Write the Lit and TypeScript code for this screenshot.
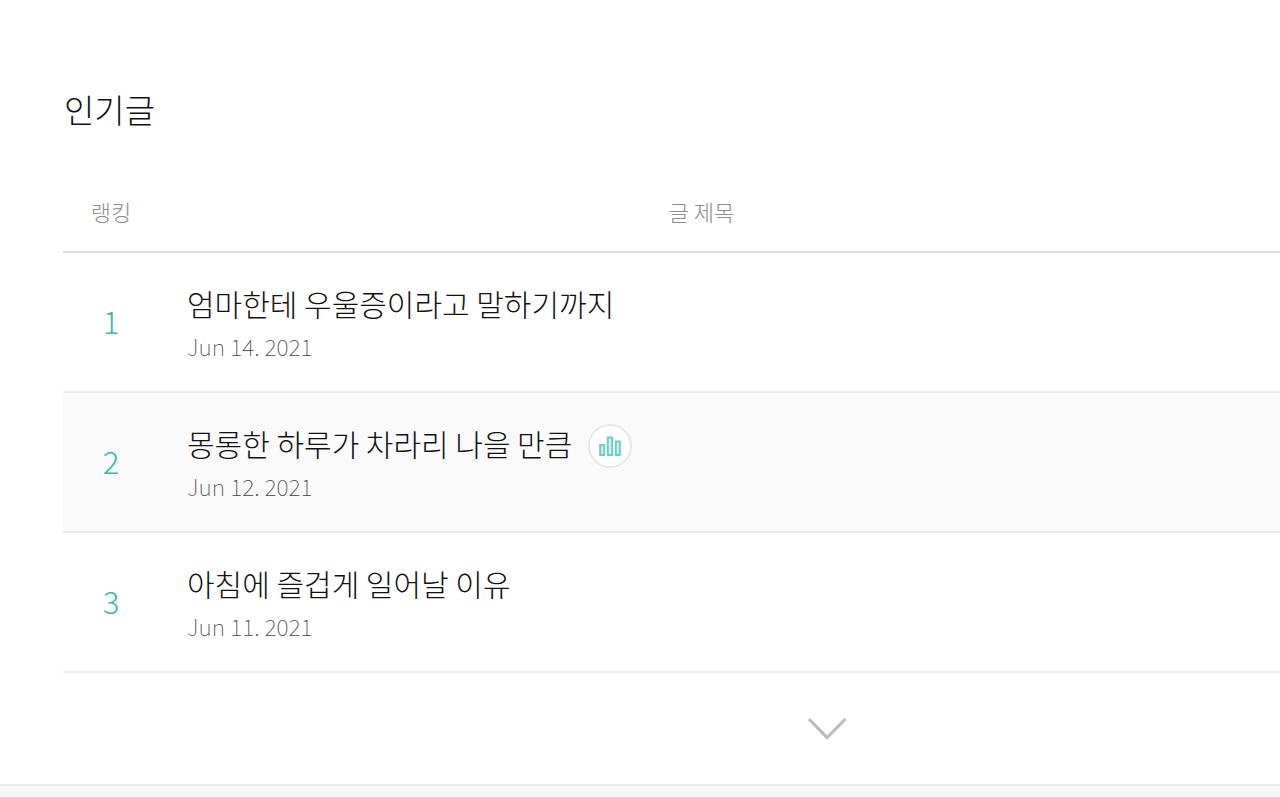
import { LitElement, html, css } from "lit";
import { customElement } from "lit/decorators.js";

interface Post { rank: number; title: string; date: string; active?: boolean; }

const posts: Post[] = [
  { rank: 1, title: "엄마한테 우울증이라고 말하기까지", date: "Jun 14. 2021" },
  { rank: 2, title: "몽롱한 하루가 차라리 나을 만큼", date: "Jun 12. 2021", active: true },
  { rank: 3, title: "아침에 즐겁게 일어날 이유", date: "Jun 11. 2021" },
];

@customElement("app-root")
export class AppRoot extends LitElement {
  static styles = css`
    :host { display: block; min-height: 100vh; overflow: hidden; background: #fff; color: #111; font-family: "Noto Sans CJK KR", sans-serif; font-weight: 300; }
    * { box-sizing: border-box; }
    .page { display: flex; flex-direction: column; min-height: 100vh; }
    .popular { padding: 85px 0 0 63px; }
    h2 { margin: 0; padding-left: 1px; font-size: 33px; line-height: 48px; font-weight: 300; }
    table { width: 100%; margin-top: 41px; border-collapse: separate; border-spacing: 0; table-layout: fixed; }
    th, td { padding: 0; font-weight: 300; }
    .rank-col { width: 96px; }
    th { height: 79px; padding-bottom: 4px; border-bottom: 2px solid #d9d9d9; color: #8c8c8c; font-size: 22px; line-height: 32px; }
    .title-head { padding-right: 36px; }
    td { height: 140px; border-bottom: 2px solid #ebebeb; }
    .rank { padding-bottom: 4px; text-align: center; color: #3ab8ae; font-size: 31px; }
    .post { padding: 4px 0 0 28px; }
    .line { display: flex; align-items: center; gap: 16px; height: 44px; }
    .title { color: inherit; text-decoration: none; font-size: 30px; line-height: 44px; }
    time { display: block; color: #444; font-size: 23px; line-height: 42px; font-weight: 100; }
    .active td { background: #fafafa; }
    button { display: grid; place-items: center; padding: 0; border: 0; background: none; }
    .stats { width: 44px; height: 44px; margin-top: 6px; border: 2px solid #e8e8e8; border-radius: 50%; background: #fff; }
    .more { width: 48px; height: 32px; margin: 40px auto 0; }
    .more-row { padding-left: 310px; }
    .footer { flex: 1; margin-top: 39px; border-top: 2px solid #ebebeb; background: #f7f7f7; }
  `;

  render() {
    return html`<div class="page">
      <main class="popular">
        <h2>인기글</h2>
        <table>
          <thead><tr><th class="rank-col" scope="col">랭킹</th><th class="title-head" scope="col">글 제목</th></tr></thead>
          <tbody>${posts.map((p) => html`<tr class=${p.active ? "active" : ""}>
            <td class="rank">${p.rank}</td>
            <td class="post">
              <div class="line"><a class="title" href="#">${p.title}</a>${p.active ? html`<button class="stats" aria-label="통계">
                <svg width="22" height="20" viewBox="0 0 22 20" fill="#d9f1ef" stroke="#6cccc5" stroke-width="2"><path d="M1.2 9h4v10h-4zM8.8 1.5h4.400v17.500h-4.400zM16.800 5.500h4v13.500h-4z"/></svg></button>` : ""}</div>
              <time>${p.date}</time>
            </td></tr>`)}</tbody>
        </table>
        <div class="more-row"><button class="more" aria-label="더보기"><svg width="40" height="24" viewBox="0 0 40 24" fill="none" stroke="#bbb" stroke-width="3"><path d="M2 2l18 18.500L38.500 2"/></svg></button></div>
      </main>
      <footer class="footer"></footer>
    </div>`;
  }
}
